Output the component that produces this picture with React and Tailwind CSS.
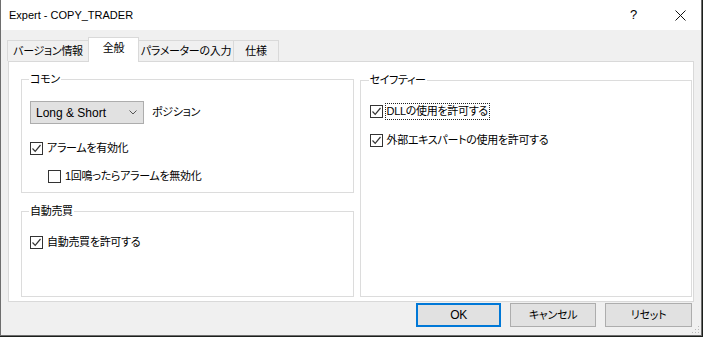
import React from 'react';

const font = "font-['Liberation_Sans','Noto_Sans_CJK_JP',sans-serif] [font-feature-settings:'palt']";

const CheckBox = ({ checked }) => (
  <span className="w-[13px] h-[13px] border border-[#333333] bg-white flex items-center justify-center shrink-0">
    {checked && (
      <svg width="11" height="11" viewBox="0 0 11 11" fill="none" stroke="#333333" strokeWidth="1.2">
        <path d="M1.5 5.5 L4.2 8.3 L9.5 2" />
      </svg>
    )}
  </span>
);

const CheckRow = ({ checked, label, focus, className = '' }) => (
  <div className={`flex items-center h-[16px] gap-[4px] ${className}`}>
    <CheckBox checked={checked} />
    <span className={`leading-[15px] whitespace-nowrap ${focus ? 'outline-1 outline-dotted outline-[#222] -ml-[1px] px-[1px]' : ''}`}>{label}</span>
  </div>
);

const Group = ({ title, className = '', children }) => (
  <fieldset className={`border border-[#dcdcdc] pl-[8px] ${className}`}>
    <legend className="px-[1px] -ml-[1px] leading-[16px] text-[#000]">{title}</legend>
    {children}
  </fieldset>
);

const tabs = [
  { label: 'バージョン情報', w: 'w-[82px]' },
  { label: '全般', w: 'w-[51px]', active: true },
  { label: 'パラメーターの入力', w: 'w-[96px]' },
  { label: '仕様', w: 'w-[46px]' },
];

export default function App() {
  return (
    <div className={`w-[703px] h-[337px] bg-[#1c1f1c] overflow-hidden ${font} text-[11px] tracking-[-0.3px] text-black`}>
      <div className="relative w-[702px] h-[336px] flex flex-col bg-[#f0f0f0] border-x border-b border-[#6e6e6e]">
        {/* title bar */}
        <div className="h-[30px] bg-white flex items-center pl-[8px] shrink-0">
          <span className="leading-none text-[11px] tracking-normal">Expert - COPY_TRADER</span>
          <span className="ml-auto mr-[38px] text-[13px]">?</span>
          <svg className="mr-[15px]" width="11" height="11" viewBox="0 0 11 11" stroke="#111" strokeWidth="1">
            <path d="M0.5 0.5 L10.5 10.5 M10.5 0.5 L0.5 10.5" />
          </svg>
        </div>

        <div className="flex-1 flex flex-col px-[7px] pt-[7px]">
          {/* tabs */}
          <div className="flex items-end h-[24px] -ml-[1px]">
            {tabs.map((t, i) => (
              <div
                key={t.label}
                className={`${t.w} whitespace-nowrap flex items-center justify-center border-x border-t border-[#d9d9d9] ${i > 0 ? '-ml-[1px]' : ''} ${
                  t.active
                    ? 'h-[25px] bg-white relative z-10 -mb-[1px] pb-[3px]'
                    : 'h-[21px] bg-[#f0f0f0]'
                }`}
              >
                {t.label}
              </div>
            ))}
          </div>

          {/* panel */}
          <div className="h-[241px] bg-white border border-[#d9d9d9] flex gap-[6px] pl-[12px] pr-[1px] pt-[9px] pb-[4px]">
            <div className="w-[334px] flex flex-col gap-[10px]">
              <Group title="コモン" className="h-[122px]">
                <div className="flex items-center gap-[8px] mt-[14px]">
                  <div className="w-[114px] h-[23px] bg-[#e1e1e1] border border-[#adadad] flex items-center pl-[5px] pr-[6px]">
                    <span className="text-[12px] tracking-normal">Long &amp; Short</span>
                    <svg className="ml-auto" width="8" height="5" viewBox="0 0 8 5" fill="none" stroke="#555" strokeWidth="1">
                      <path d="M0.5 0.5 L4 4 L7.5 0.5" />
                    </svg>
                  </div>
                  <span>ポジション</span>
                </div>
                <CheckRow checked label="アラームを有効化" className="mt-[16px]" />
                <CheckRow label="1回鳴ったらアラームを無効化" className="mt-[12px] ml-[18px]" />
              </Group>
              <Group title="自動売買" className="flex-1">
                <CheckRow checked label="自動売買を許可する" className="mt-[15px]" />
              </Group>
            </div>
            <div className="w-[334px] flex flex-col pt-[1px]">
              <Group title="セイフティー" className="flex-1 pl-[9px]">
                <CheckRow checked focus label="DLLの使用を許可する" className="mt-[15px]" />
                <CheckRow checked label="外部エキスパートの使用を許可する" className="mt-[13px]" />
              </Group>
            </div>
          </div>

          {/* buttons */}
          <div className="flex justify-end gap-[9px] mt-[1px] pr-[2px]">
            <button className="w-[85px] h-[24px] bg-[#e1e1e1] border-2 border-[#0078d7] flex items-center justify-center text-[12px]">OK</button>
            <button className="w-[86px] h-[24px] bg-[#e1e1e1] border border-[#adadad] flex items-center justify-center">キャンセル</button>
            <button className="w-[87px] h-[24px] bg-[#e1e1e1] border border-[#adadad] flex items-center justify-center">リセット</button>
          </div>
        </div>

        {/* size grip */}
        <svg className="absolute right-[1px] bottom-[1px]" width="8" height="8" viewBox="0 0 8 8" fill="#b8b8b8">
          <rect x="6" y="0" width="1" height="1" />
          <rect x="3" y="3" width="1" height="1" />
          <rect x="6" y="3" width="1" height="1" />
          <rect x="0" y="6" width="1" height="1" />
          <rect x="3" y="6" width="1" height="1" />
          <rect x="6" y="6" width="1" height="1" />
        </svg>
      </div>
    </div>
  );
}
